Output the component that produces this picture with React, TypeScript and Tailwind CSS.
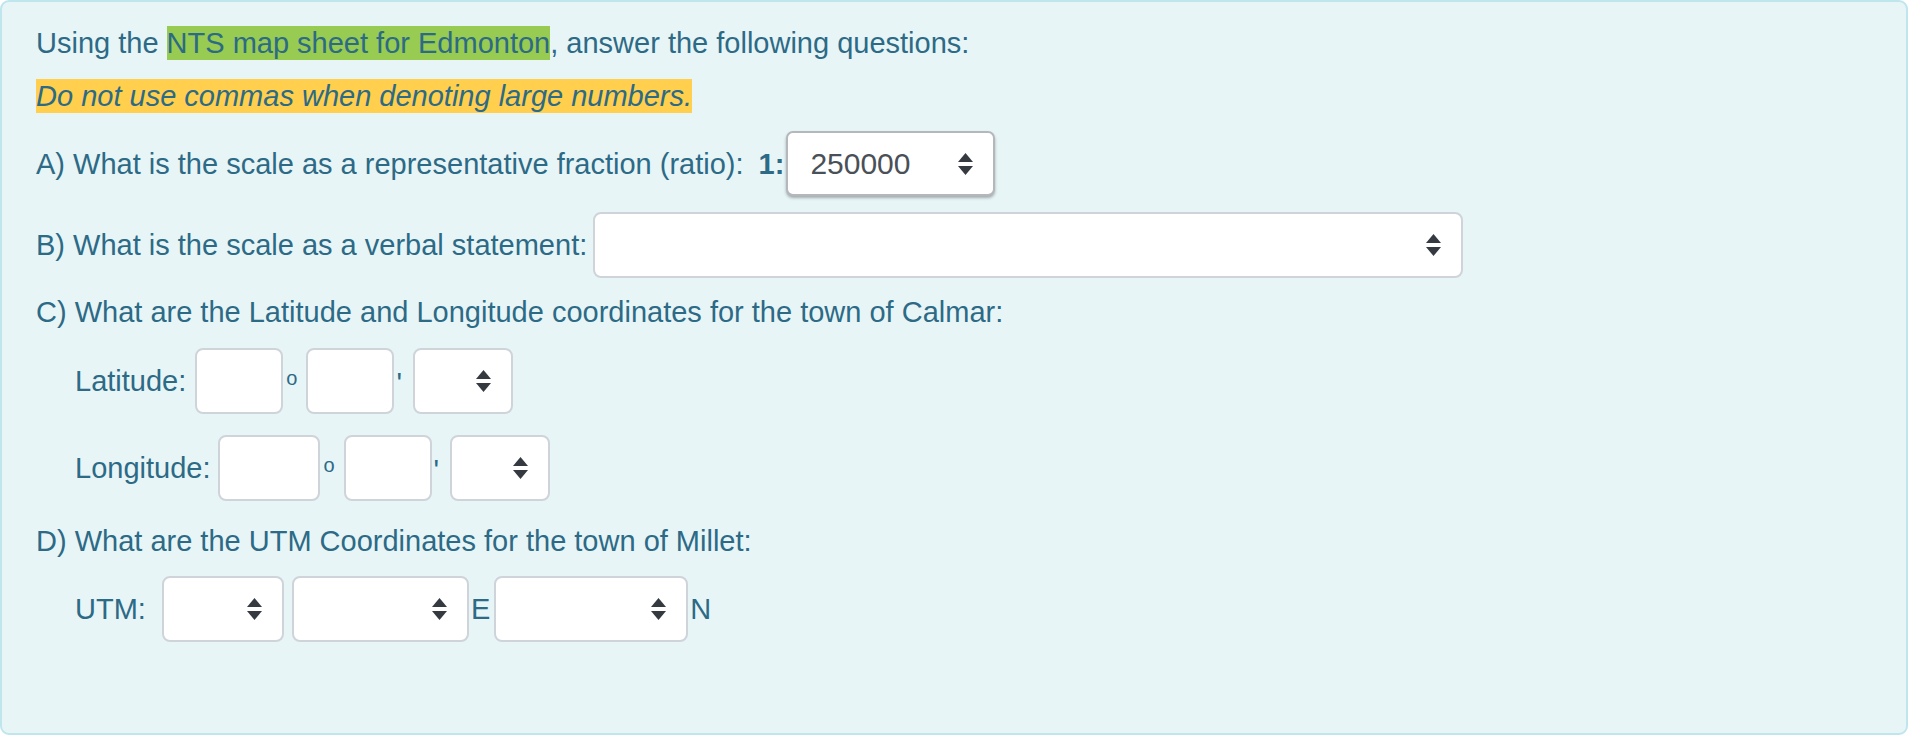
import React from "react";

const Arrows = () => (
  <svg width="15" height="22" viewBox="0 0 15 22" className="shrink-0">
    <polygon points="0,9 7.5,0 15,9" fill="#343a40" />
    <polygon points="0,13 7.5,22 15,13" fill="#343a40" />
  </svg>
);

const TextBox = ({ w }: { w: string }) => (
  <div className={`${w} h-[66px] bg-white border-2 border-[#ced4da] rounded-[8px] shrink-0`} />
);

const SelectBox = ({ w, value }: { w: string; value?: string }) => (
  <div
    className={`${w} h-[66px] bg-white border-2 border-[#ced4da] rounded-[8px] shrink-0 flex items-center justify-between pl-[20px] pr-[20px]`}
  >
    <span className="text-[30px] text-[#495057]">{value}</span>
    <Arrows />
  </div>
);

// degree and minute marks between the boxes
const Deg = () => <span className="text-[20px] leading-none self-start mt-[20px] ml-[3px] mr-[9px]">o</span>;
const Min = () => <span className="leading-none self-start mt-[21px] ml-[2px] mr-[11px]">'</span>;

export default function App() {
  return (
    <div
      className="w-[1908px] h-[736px] bg-white"
      style={{ fontFamily: '"Liberation Sans", Arial, sans-serif' }}
    >
      <div className="h-[735px] bg-[#e8f5f7] border-2 border-[#bee6ec] rounded-[9px] pt-[24px] pl-[34px] text-[#2c6a86] text-[29px] leading-[34px]">
        <p>
          Using the <span className="bg-[#97cb51] py-[1px]">NTS map sheet for Edmonton</span>, answer the
          following questions:
        </p>
        <p className="mt-[19px]">
          <span className="bg-[#ffcf4d] italic py-[1px]">Do not use commas when denoting large numbers.</span>
        </p>

        <div className="mt-[18px] flex items-center">
          <span>A) What is the scale as a representative fraction (ratio):</span>
          <span className="font-bold ml-[15px] mr-[2px]">1:</span>
          <div className="w-[209px] h-[65px] bg-white border-2 border-[#b4b8bc] rounded-[7px] shadow-[0_2px_3px_rgba(0,0,0,0.3)] flex items-center justify-between pl-[22px] pr-[20px]">
            <span className="text-[30px] text-[#495057]">250000</span>
            <Arrows />
          </div>
        </div>

        <div className="mt-[16px] flex items-center">
          <span className="mr-[6px]">B) What is the scale as a verbal statement:</span>
          <SelectBox w="w-[870px] h-[65px]" />
        </div>

        <p className="mt-[17px]">C) What are the Latitude and Longitude coordinates for the town of Calmar:</p>

        <div className="mt-[19px] pl-[39px] flex items-center">
          <span className="mr-[9px]">Latitude:</span>
          <TextBox w="w-[88px]" />
          <Deg />
          <TextBox w="w-[88px]" />
          <Min />
          <SelectBox w="w-[100px]" />
        </div>

        <div className="mt-[21px] pl-[39px] flex items-center">
          <span className="mr-[8px]">Longitude:</span>
          <TextBox w="w-[102px]" />
          <Deg />
          <TextBox w="w-[88px]" />
          <Min />
          <SelectBox w="w-[100px]" />
        </div>

        <p className="mt-[23px]">D) What are the UTM Coordinates for the town of Millet:</p>

        <div className="mt-[18px] pl-[39px] flex items-center">
          <span className="mr-[16px]">UTM:</span>
          <SelectBox w="w-[122px]" />
          <SelectBox w="w-[177px] ml-[8px]" />
          <span className="ml-[2px] mr-[4px]">E</span>
          <SelectBox w="w-[194px]" />
          <span className="ml-[2px]">N</span>
        </div>
      </div>
    </div>
  );
}
